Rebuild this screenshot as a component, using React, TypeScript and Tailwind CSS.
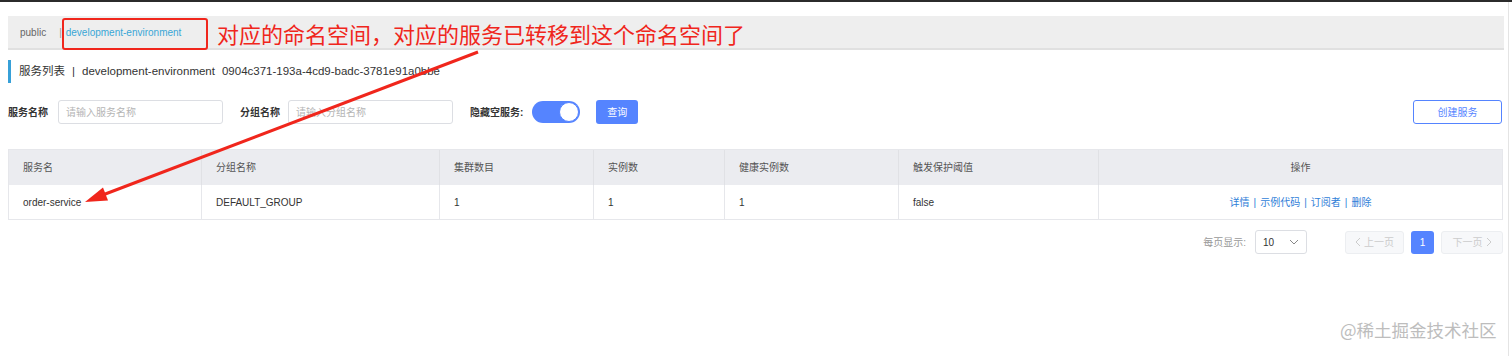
import React from 'react';

const cols = [
    { title: '服务名', w: 'w-[193px]' },
    { title: '分组名称', w: 'w-[238px]' },
    { title: '集群数目', w: 'w-[154px]' },
    { title: '实例数', w: 'w-[131px]' },
    { title: '健康实例数', w: 'w-[174px]' },
    { title: '触发保护阈值', w: 'w-[200px]' },
];

const row = ['order-service', 'DEFAULT_GROUP', '1', '1', '1', 'false'];

const font = "font-['Liberation_Sans','Noto_Sans_CJK_SC',sans-serif]";

export default function App() {
    return (
        <div className={`relative w-[1512px] h-[356px] bg-white overflow-hidden text-[#333] ${font}`}>
            <div className="h-[2px] bg-[#2b2b2b]" />
            <div className="absolute right-[3px] top-[2px] bottom-0 w-px bg-[#e4e4e4]" />

            <div className="pl-2 pr-2 pt-[14px] w-[1511px]">
                {/* namespace bar */}
                <div className="w-[1496px] h-[34px] bg-[#eeeeee] border-b-2 border-[#e0e0e0] flex items-center pl-3 text-[10px]">
                    <span className="text-[#666]">public</span>
                    <span className="ml-[13px] text-[#999]">|</span>
                    <span className="ml-[4px] text-[#39a6d6]">development-environment</span>
                </div>

                {/* title */}
                <div className="mt-[10px] h-[23px] border-l-[3px] border-[#37a0d8] flex items-center pl-[8px] text-[11.5px] text-[#333]">
                    <span>服务列表</span>
                    <span className="mx-[7px]">|</span>
                    <span>development-environment</span>
                    <span className="ml-[7px]">0904c371-193a-4cd9-badc-3781e91a0bbe</span>
                </div>

                {/* filters */}
                <div className="mt-[17px] h-[24px] flex items-center text-[10px]">
                    <span className="font-bold text-[#333]">服务名称</span>
                    <div className="ml-[10px] w-[165px] h-[24px] border border-[#dcdee3] rounded-[3px] flex items-center px-[7px] text-[#b5b5b5]">请输入服务名称</div>
                    <span className="ml-[17px] font-bold text-[#333]">分组名称</span>
                    <div className="ml-[8px] w-[165px] h-[24px] border border-[#dcdee3] rounded-[3px] flex items-center px-[7px] text-[#b5b5b5]">请输入分组名称</div>
                    <span className="ml-[17px] font-bold text-[#333]">隐藏空服务:</span>
                    <div className="ml-[9px] w-[48px] h-[22px] rounded-full bg-[#5584ff] relative">
                        <div className="absolute right-[1px] top-[1px] w-[20px] h-[20px] rounded-full bg-white border border-[#5584ff]" />
                    </div>
                    <div className="ml-[16px] w-[42px] h-[24px] rounded-[3px] bg-[#5584ff] text-white flex items-center justify-center">查询</div>
                    <div className="ml-auto mr-[1px] w-[89px] h-[24px] rounded-[3px] border border-[#5584ff] text-[#5584ff] flex items-center justify-center">创建服务</div>
                </div>

                {/* table */}
                <div className="mt-[25px] w-[1495px] border border-[#e6e7eb] text-[10px]">
                    <div className="flex h-[35px] bg-[#ebecf0]">
                        {cols.map(c => (
                            <div key={c.title} className={`${c.w} border-r border-[#e0e1e5] flex items-center pl-[14px] text-[#555]`}>{c.title}</div>
                        ))}
                        <div className="flex-1 flex items-center justify-center text-[#555]">操作</div>
                    </div>
                    <div className="flex h-[34px] bg-white">
                        {cols.map((c, i) => (
                            <div key={c.title} className={`${c.w} border-r border-[#e6e7eb] flex items-center pl-[14px] text-[#333]`}>{row[i]}</div>
                        ))}
                        <div className="flex-1 flex items-center justify-center text-[#2f7ed8] gap-[4px]">
                            <span>详情</span><span>|</span><span>示例代码</span><span>|</span><span>订阅者</span><span>|</span><span>删除</span>
                        </div>
                    </div>
                </div>

                {/* pagination */}
                <div className="mt-[10px] w-[1495px] h-[24px] flex items-center justify-end text-[10px]">
                    <span className="text-[#999]">每页显示:</span>
                    <div className="ml-[9px] w-[52px] h-[24px] border border-[#dcdee3] rounded-[3px] flex items-center justify-between px-[7px] text-[#333]">
                        <span>10</span>
                        <svg width="10" height="6" viewBox="0 0 10 6"><path d="M1 1l4 4 4-4" fill="none" stroke="#888" strokeWidth="1" /></svg>
                    </div>
                    <div className="ml-[38px] w-[59px] h-[23px] rounded-[3px] bg-[#f7f8fa] border border-[#eceef1] flex items-center justify-center gap-[3px] text-[#ccc]">
                        <svg width="6" height="10" viewBox="0 0 6 10"><path d="M5 1L1 5l4 4" fill="none" stroke="#ccc" strokeWidth="1" /></svg>
                        <span>上一页</span>
                    </div>
                    <div className="ml-[7px] w-[23px] h-[23px] rounded-[3px] bg-[#5584ff] text-white flex items-center justify-center">1</div>
                    <div className="ml-[7px] w-[62px] h-[23px] rounded-[3px] bg-[#f7f8fa] border border-[#eceef1] flex items-center justify-center gap-[3px] text-[#ccc]">
                        <span>下一页</span>
                        <svg width="6" height="10" viewBox="0 0 6 10"><path d="M1 1l4 4-4 4" fill="none" stroke="#ccc" strokeWidth="1" /></svg>
                    </div>
                </div>
            </div>

            {/* annotation */}
            <div className="absolute left-[62px] top-[18px] w-[146px] h-[32px] border-2 border-[#f0261c] rounded-[3px]" />
            <div className="absolute left-[217px] top-[18px] text-[22px] leading-[30px] text-[#f0261c] font-['Noto_Sans_CJK_SC',sans-serif]">
                对应的命名空间，对应的服务已转移到这个命名空间了
            </div>
            <svg className="absolute left-0 top-0" width="1512" height="356" viewBox="0 0 1512 356">
                <line x1="478" y1="52" x2="104" y2="194.5" stroke="#f0261c" strokeWidth="3" />
                <polygon points="85,202 108,200.6 103,187.6" fill="#f0261c" />
            </svg>

            <div className="absolute left-[1340px] top-[317px] text-[17.5px] text-[#bdbdbd] font-['Noto_Sans_CJK_SC',sans-serif]">@稀土掘金技术社区</div>
        </div>
    );
}
